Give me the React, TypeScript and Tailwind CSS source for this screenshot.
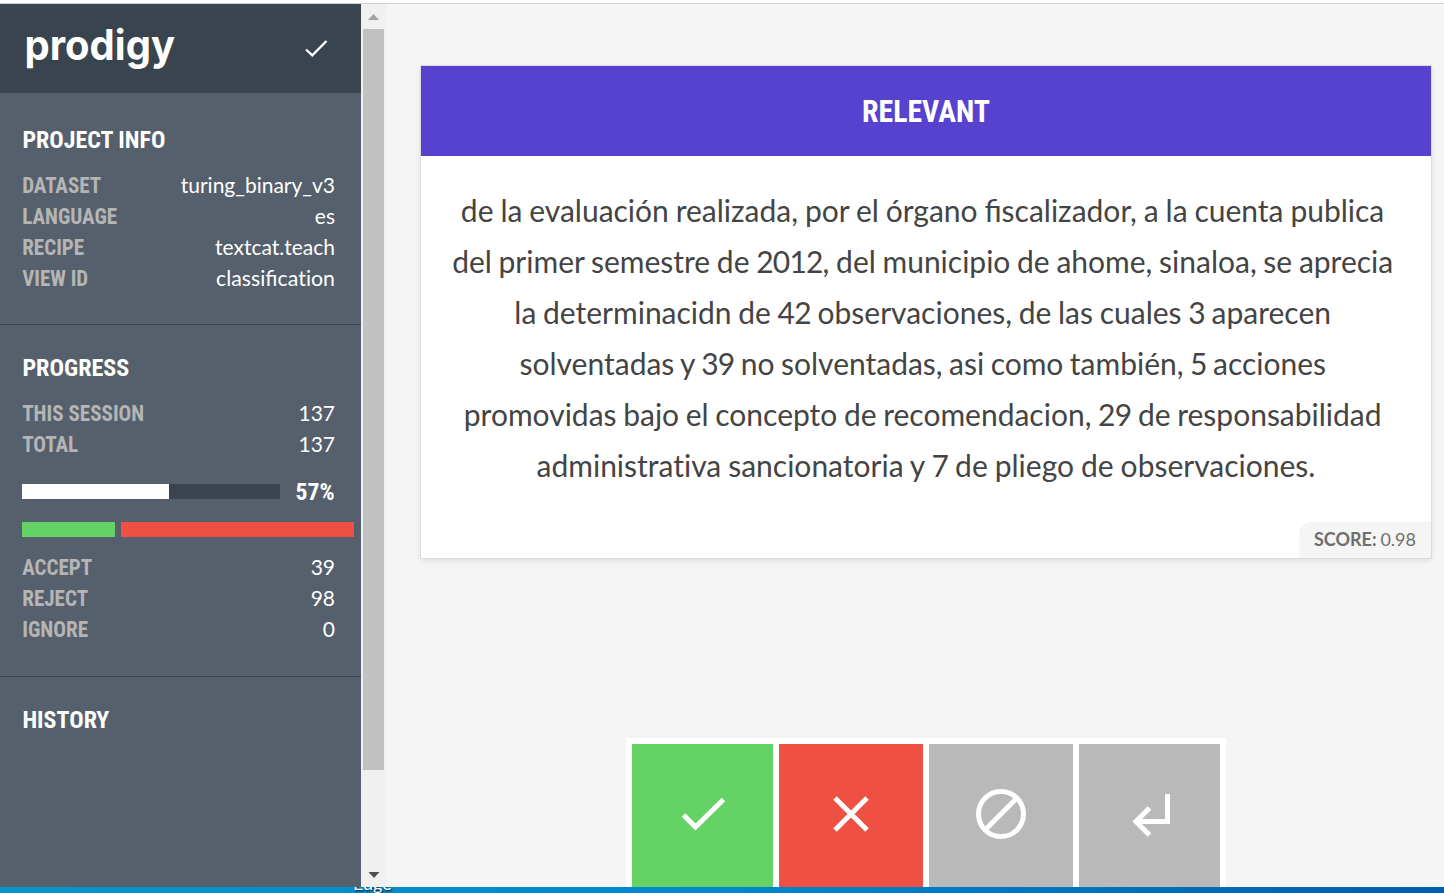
import React from 'react';

const condensed = "font-['Roboto_Condensed','Roboto',sans-serif] font-bold [font-stretch:75%]";

function Heading({ children, width }: { children: string; width: number }) {
  return (
    <svg className="block h-[31px] overflow-visible" width={width} height="31" role="heading">
      <text x="0.4" y="24" textLength={width} lengthAdjust="spacingAndGlyphs" className={`${condensed} fill-white text-[24px]`}>
        {children}
      </text>
    </svg>
  );
}

function Row({ label, width, value }: { label: string; width: number; value: React.ReactNode }) {
  return (
    <div className="flex h-[31px] items-center justify-between">
      <svg className="block overflow-visible" width={width} height="31">
        <text x="0.2" y="23" textLength={width} lengthAdjust="spacingAndGlyphs" className={`${condensed} fill-[#b5b5b5] text-[21.5px]`}>
          {label}
        </text>
      </svg>
      <span className="pb-0.5 text-[21px] leading-[29px] text-white">{value}</span>
    </div>
  );
}

const lines = [
  { text: 'de la evaluación realizada, por el órgano fiscalizador, a la cuenta publica\u00a0', style: '[word-spacing:-0.8px]' },
  { text: 'del primer semestre de 2012, del municipio de ahome, sinaloa, se aprecia\u00a0', style: '[word-spacing:-1px]' },
  { text: 'la determinacidn de 42 observaciones, de las cuales 3 aparecen\u00a0', style: '[word-spacing:-1px]' },
  { text: 'solventadas y 39 no solventadas, asi como también, 5 acciones\u00a0', style: '[word-spacing:-1.25px]' },
  { text: 'promovidas bajo el concepto de recomendacion, 29 de responsabilidad\u00a0', style: '[word-spacing:-1.05px]' },
  { text: 'administrativa sancionatoria y 7 de pliego de observaciones.', style: '[word-spacing:-0.7px] [font-variant-ligatures:none]' },
];

function Line({ text, style }: { text: string; style: string }) {
  return (
    <p className={`whitespace-nowrap ${style}`}>
      {text.split(/(\d+)/).map((part, i) =>
        /^\d+$/.test(part) ? <span key={i} className="tracking-[-0.8px]">{part}</span> : part,
      )}
    </p>
  );
}

function Sidebar() {
  return (
    <aside className="flex w-[361px] shrink-0 flex-col bg-[#55606c]">
      <header className="h-[89px] shrink-0 bg-[#3a444e]">
        <svg className="block" width="361" height="89">
          <text x="24.5" y="56" textLength="150.5" lengthAdjust="spacingAndGlyphs" className="fill-white font-['Inter',sans-serif] text-[42px] font-bold">
            prodigy
          </text>
          <path d="M306 45.5 L312.3 51.3 L326.5 37" fill="none" stroke="white" strokeWidth="2.3" />
        </svg>
      </header>
      <section className="h-[232px] shrink-0 border-b border-[#3a444e] pl-[22px] pr-[26px] pt-[31px]">
        <Heading width={143}>PROJECT INFO</Heading>
        <div className="pt-[15px]">
          <Row label="DATASET" width={79} value="turing_binary_v3" />
          <Row label="LANGUAGE" width={95} value="es" />
          <Row label="RECIPE" width={62} value="textcat.teach" />
          <Row
            label="VIEW ID"
            width={66}
            value={<span className="text-[21.3px]">classifica<span className="[font-variant-ligatures:none]">tion</span></span>}
          />
        </div>
      </section>
      <section className="h-[352px] shrink-0 border-b border-[#3a444e] pl-[22px] pr-[26px] pt-[27px]">
        <Heading width={107}>PROGRESS</Heading>
        <div className="pt-[15px]">
          <Row label="THIS SESSION" width={122} value="137" />
          <Row label="TOTAL" width={56} value="137" />
        </div>
        <div className="mt-4 flex h-[31px] items-center justify-between">
          <div className="h-[15px] w-[258px] bg-[#3a444e]">
            <div className="h-full w-[147px] bg-white" />
          </div>
          <svg className="overflow-visible" width="39" height="31">
            <text x="-0.5" y="24" textLength="39" lengthAdjust="spacingAndGlyphs" className={`${condensed} fill-white text-[23px]`}>
              57%
            </text>
          </svg>
        </div>
        <div className="mt-[15px] flex h-[15px] gap-1.5">
          <div className="w-[93px] shrink-0 bg-[#64d264]" />
          <div className="w-[233px] shrink-0 bg-[#ee5043]" />
        </div>
        <div className="pt-[15px]">
          <Row label="ACCEPT" width={70} value="39" />
          <Row label="REJECT" width={66} value="98" />
          <Row label="IGNORE" width={66} value="0" />
        </div>
      </section>
      <section className="pl-[22px] pt-[27px]">
        <Heading width={87}>HISTORY</Heading>
      </section>
    </aside>
  );
}

function Scrollbar() {
  return (
    <div className="flex w-[25px] shrink-0 flex-col items-center justify-between bg-[#f0f0f0]">
      <div>
        <svg className="block" width="20" height="25"><path d="M5 16 L10.5 10 L16 16 Z" fill="#a3a3a3" /></svg>
        <div className="h-[741px] w-[21px] bg-[#c1c1c1]" />
      </div>
      <svg className="block" width="20" height="21"><path d="M4.5 6 L10 12 L15.5 6 Z" fill="#505050" /></svg>
    </div>
  );
}

function Card() {
  return (
    <article className="relative h-[492px] w-[1010px] bg-white shadow-[0_0_0_1px_#dcdcdc,0_2px_6px_rgba(0,0,0,0.12)]">
      <header className="flex h-[90px] items-center justify-center bg-[#5742d0]">
        <svg className="overflow-visible" width="128" height="40">
          <text x="0" y="31" textLength="128" lengthAdjust="spacingAndGlyphs" className={`${condensed} fill-white text-[30.5px]`}>
            RELEVANT
          </text>
        </svg>
      </header>
      <div className="pt-[29px] text-center text-[30px] leading-[51px] text-[#444]">
        {lines.map((line) => (
          <Line key={line.text} text={line.text} style={line.style} />
        ))}
      </div>
      <div className="absolute bottom-0 right-0 flex h-9 w-[132px] items-center justify-end rounded-tl-[12px] bg-[#f5f5f5] pb-0.5 pr-[15px] text-[18px] text-[#6e6e6e]">
        <span className="[word-spacing:-0.8px]"><b>SCORE:</b> 0.98</span>
      </div>
    </article>
  );
}

function Actions() {
  return (
    <div className="flex h-[149px] w-[600px] gap-1.5 bg-white px-1.5 pt-1.5">
      <button className="w-[141px] bg-[#64d264]">
        <svg className="block" width="141" height="143" fill="none" stroke="white" strokeWidth="5">
          <path d="M51.5 71 L63.5 83 L91.5 55.5" />
        </svg>
      </button>
      <button className="w-[144px] bg-[#ee5043]">
        <svg className="block" width="144" height="143" fill="none" stroke="white" strokeWidth="5">
          <path d="M56 54 L88 86 M88 54 L56 86" />
        </svg>
      </button>
      <button className="w-[144px] bg-[#b9b9b9]">
        <svg className="block" width="144" height="143" fill="none" stroke="white" strokeWidth="5">
          <circle cx="72" cy="70" r="22.5" />
          <path d="M56.5 85.5 L87.5 54.5" />
        </svg>
      </button>
      <button className="w-[141px] bg-[#b9b9b9]">
        <svg className="block" width="141" height="143" fill="none" stroke="white" strokeWidth="5">
          <path d="M88.5 50 V77.5 H57 M70.5 64 L57 77.5 L70.5 91" />
        </svg>
      </button>
    </div>
  );
}

export default function App() {
  return (
    <div className="flex h-[893px] w-[1444px] flex-col overflow-hidden bg-white font-['Lato',sans-serif]">
      <div className="h-1 shrink-0 border-b border-[#d4d4d4]" />
      <div className="flex h-[883px] shrink-0">
        <Sidebar />
        <Scrollbar />
        <main className="flex flex-1 flex-col items-center justify-between bg-[#f5f5f5] pl-[22px] pt-[62px]">
          <Card />
          <Actions />
        </main>
      </div>
      <footer className="h-1.5 shrink-0 overflow-hidden bg-linear-to-r from-[#0795cb] via-[#0088cf] to-[#005eae] pl-[353px]">
        <div className="-mt-[14px] text-[18px] leading-5 text-white [text-shadow:1px_1px_2px_#000]">Edge</div>
      </footer>
    </div>
  );
}
